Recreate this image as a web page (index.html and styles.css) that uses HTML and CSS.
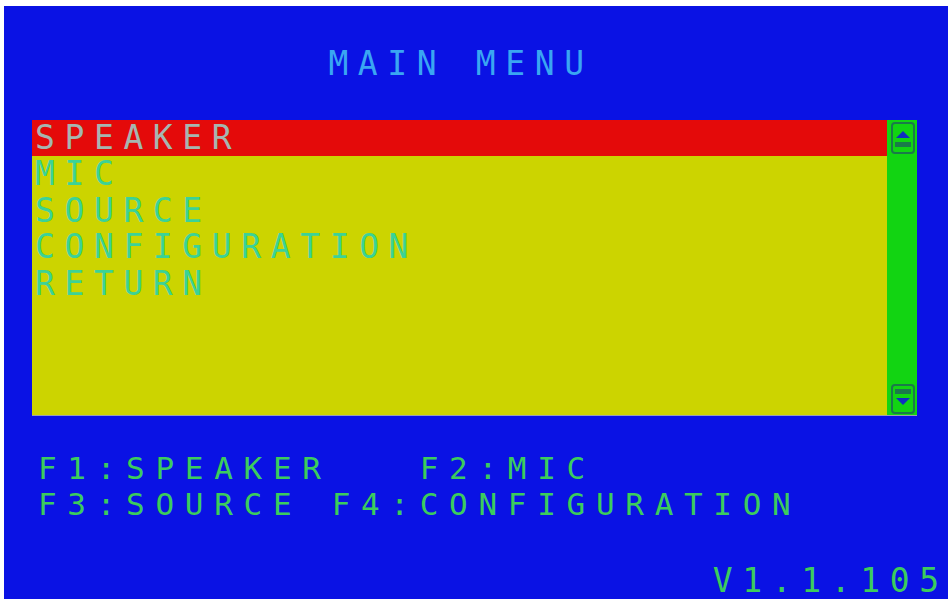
FILE: index.html
```html
<!DOCTYPE html>
<html>
<head>
<meta charset="utf-8">
<link rel="stylesheet" href="styles.css">
</head>
<body>
<div class="screen">
  <div class="title">MAIN MENU</div>
  <div class="menu">
    <div class="list">
      <div class="item selected">SPEAKER</div>
      <div class="item">MIC</div>
      <div class="item">SOURCE</div>
      <div class="item">CONFIGURATION</div>
      <div class="item">RETURN</div>
    </div>
    <div class="scroll">
      <div class="btn up">
        <svg viewBox="0 0 24 32" width="24" height="32"><rect x="1" y="1" width="22" height="30" rx="3" fill="none" stroke="#1a7a4a" stroke-width="2"/><polygon points="5,16 12,9 19,16" fill="#1030c0"/><rect x="4" y="20" width="16" height="5" fill="#1a7a4a"/></svg>
      </div>
      <div class="btn down">
        <svg viewBox="0 0 24 30" width="24" height="30"><rect x="1" y="1" width="22" height="28" rx="3" fill="none" stroke="#1a7a4a" stroke-width="2"/><rect x="4" y="5" width="16" height="5" fill="#1a7a4a"/><polygon points="5,14 12,21 19,14" fill="#1030c0"/></svg>
      </div>
    </div>
  </div>
  <div class="keys">
    <div class="keyrow">F1:SPEAKER   F2:MIC</div>
    <div class="keyrow">F3:SOURCE F4:CONFIGURATION</div>
  </div>
  <div class="version">V1.1.10<span class="last">5</span></div>
</div>
</body>
</html>
```
FILE: styles.css
```css
html, body {
  margin: 0;
  padding: 0;
  background: #ffffff;
}
body {
  width: 950px;
  height: 604px;
  overflow: hidden;
}
.screen {
  box-sizing: border-box;
  margin: 6px 0 0 4px;
  width: 944px;
  height: 593px;
  background: #0a12e4;
  display: flex;
  flex-direction: column;
  font-family: "DejaVu Sans Mono", "Liberation Mono", monospace;
  font-size: 33px;
  line-height: 36.5px;
  letter-spacing: 9.6px;
  padding-top: 40px;
}
.title {
  text-align: center;
  color: #3aa6f2;
  padding-right: 30px;
}
.menu {
  display: flex;
  margin: 37px 0 0 28px;
  width: 885px;
  height: 295px;
  box-shadow: 0 1px 0 #9aa0b0;
}
.list {
  flex: 1;
  background: #ccd400;
  color: #3cd296;
}
.item {
  padding-left: 3px;
  white-space: pre;
}
.item.selected {
  background: #e40a0a;
  color: #a6b6b0;
}
.scroll {
  width: 30px;
  background: #12d412;
  display: flex;
  flex-direction: column;
  justify-content: space-between;
  align-items: center;
  padding: 2px 0 1px 2px;
  box-sizing: border-box;
}
.btn svg {
  display: block;
}
.keys {
  margin: 35px 0 0 34px;
  color: #3ccc5c;
  font-size: 31px;
  letter-spacing: 10.7px;
}
.keyrow {
  white-space: pre;
  line-height: 36px;
}
.version {
  margin-top: auto;
  text-align: right;
  color: #3ccc5c;
  margin-right: 9px;
}
.version .last {
  letter-spacing: 0;
}
```
